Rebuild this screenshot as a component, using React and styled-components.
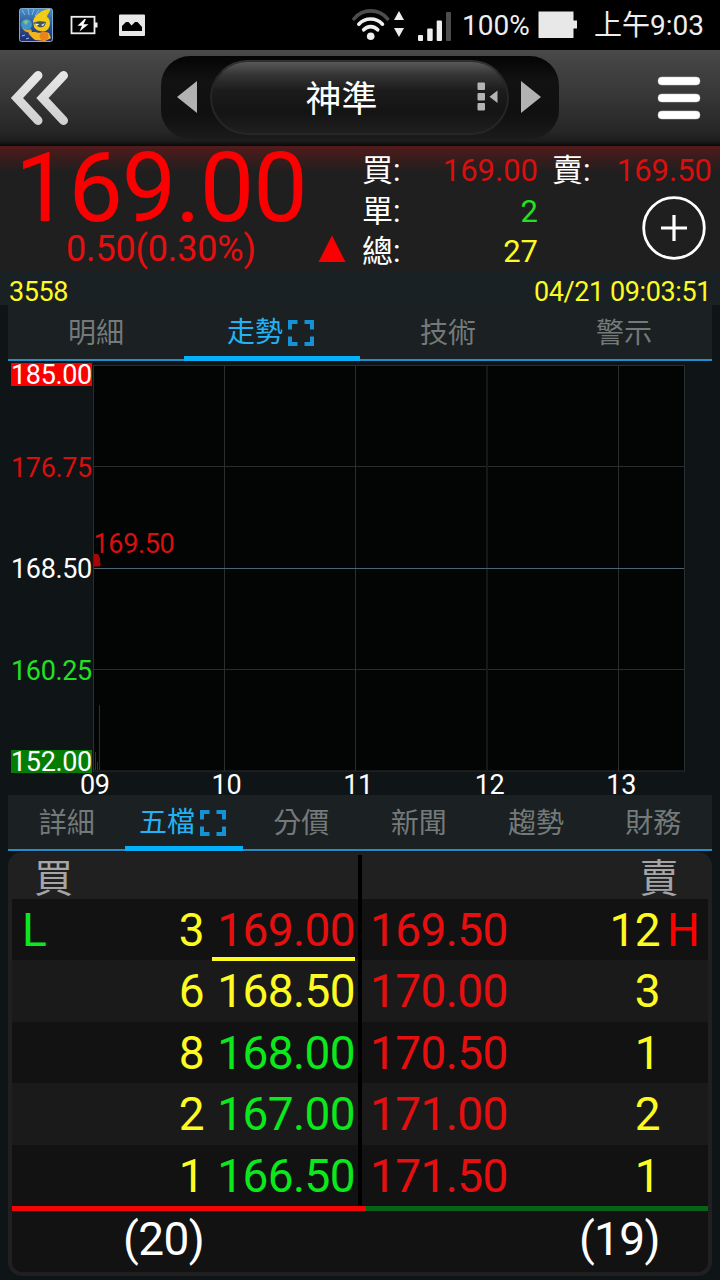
import React from "react";
import styled, { createGlobalStyle } from "styled-components";

const GlobalStyle = createGlobalStyle`
  body {
    margin: 0;
    background: #0f1416;
    font-family: Roboto, "Noto Sans CJK TC", sans-serif;
  }

  * {
    box-sizing: border-box;
  }

  svg {
    display: block;
    flex: none;
  }
`;

const RED = "#e60f0f";
const GREEN = "#0be81c";
const YELLOW = "#fdfb22";

const mainTabs = ["明細", "走勢", "技術", "警示"];
const subTabs = ["詳細", "五檔", "分價", "新聞", "趨勢", "財務"];

const priceLabels = [
  { text: "185.00", color: "#fff", fill: "#fb0000" },
  { text: "176.75", color: "#d90f0f" },
  { text: "168.50", color: "#fff" },
  { text: "160.25", color: "#24e024" },
  { text: "152.00", color: "#fff", fill: "#057d05" },
];

const hours = ["09", "10", "11", "12", "13"];

const depth = [
  { tag: "L", bidVol: 3, bid: "169.00", color: RED, ask: "169.50", askVol: 12, askTag: "H", last: true },
  { bidVol: 6, bid: "168.50", color: YELLOW, ask: "170.00", askVol: 3 },
  { bidVol: 8, bid: "168.00", color: GREEN, ask: "170.50", askVol: 1 },
  { bidVol: 2, bid: "167.00", color: GREEN, ask: "171.00", askVol: 2 },
  { bidVol: 1, bid: "166.50", color: GREEN, ask: "171.50", askVol: 1 },
];

function StatusIcons() {
  return (
    <>
      <svg width="34" height="34" viewBox="0 0 34 34">
        <defs>
          <linearGradient id="app" x1="0" y1="0" x2="0" y2="1">
            <stop offset="0" stopColor="#4b8fd0" />
            <stop offset="0.5" stopColor="#2b5590" />
            <stop offset="1" stopColor="#1f2c70" />
          </linearGradient>
        </defs>
        <rect x="0.5" y="0.5" width="33" height="33" rx="2" fill="url(#app)" stroke="#7ea9c9" />
        <path d="M3 2l3 5M9 1l1 6M15 1l-2 6M20 2l-4 6" stroke="#8fc4ea" strokeWidth="0.8" />
        <path d="M14 13C16 6 24 1 31 1c1 2-3 5-3 8 4 2 4 10 0 13-4 3-11 1-13-3z" fill="#f0cb18" />
        <path d="M14 15c4-2 9-2 13-1-1 5-4 6-7 5-2-1-4-2-6-4z" fill="#46535a" />
        <path d="M15.500 15.500l5 .5-3 2zM22 17l4-2-2 3z" fill="#e9efe9" />
        <path d="M9 22l3 2 4 0c5 2 10-1 14 1l2 5-6 3-10-1C13 29 9 27 9 22z" fill="#f5b41a" />
        <circle cx="25" cy="28" r="4.500" fill="#ea831c" />
        <circle cx="7.500" cy="16.500" r="5.500" fill="#3f94c8" />
        <path d="M4 14c2-2 4-2 6-1l-3 4z" fill="#8abf75" />
        <path d="M3 19c2 3 6 4 9 2l1 3c-4 1-8 0-10-5z" fill="#e6a825" />
        <path d="M3 28l3-1M7 31l3-1" stroke="#a4b8e8" />
      </svg>
      <svg width="28" height="20" viewBox="0 0 28 20">
        <rect x="1.500" y="1.800" width="23" height="16.500" fill="none" stroke="#eee" strokeWidth="1.800" />
        <rect x="25" y="7.500" width="2.500" height="5" fill="#eee" />
        <path d="M14.500 4L7.500 10.800h4.500L9.500 16.500l9-7.200h-5l2.500-5.300z" fill="#fff" />
      </svg>
      <svg width="26" height="22" viewBox="0 0 26 22">
        <rect y="0.500" width="26" height="21.500" rx="1" fill="#e8e8e8" />
        <path d="M3 17v-5l4-4h2.500l3 3.500 3.500-3.500h2.500l4.500 5v4z" fill="#000" />
      </svg>
    </>
  );
}

function SignalIcons() {
  return (
    <svg width="100" height="36" viewBox="352 8 100 36">
      <g fill="none" strokeWidth="3.600" strokeLinecap="round">
        <path d="M354 19.800A21.600 21.600 0 0 1 387.500 19.800" stroke="#4c4c4c" />
        <path d="M358.800 25.200A16 16 0 0 1 382.500 25.200" stroke="#eee" />
        <path d="M363.700 30.800A9.300 9.300 0 0 1 377.700 30.800" stroke="#eee" />
      </g>
      <circle cx="370.700" cy="37.200" r="3.800" fill="#eee" />
      <path d="M394 21l5-9 5 9zM394 29h10l-5 9z" fill="#eee" />
      <g fill="#eee">
        <rect x="418" y="36" width="5" height="6" rx="1" />
        <rect x="427.200" y="29.500" width="5.500" height="12.500" rx="1" />
        <rect x="436.700" y="21.500" width="5.300" height="20.500" rx="1" />
      </g>
      <rect x="446" y="13" width="5" height="29" rx="1" fill="#4c4c4c" />
    </svg>
  );
}

function BatteryIcon() {
  return (
    <svg width="40" height="28" viewBox="0 0 40 28">
      <path d="M0.500 0.500h35v9h3.500v8h-3.500v9.500H0.500z" fill="#e8e8e8" />
    </svg>
  );
}

function BackIcon() {
  return (
    <svg width="62" height="62" viewBox="0 0 62 62">
      <defs>
        <linearGradient id="chev" gradientUnits="userSpaceOnUse" x1="0" y1="4" x2="0" y2="58">
          <stop offset="0" stopColor="#e8e8e8" />
          <stop offset="1" stopColor="#cfcfcf" />
        </linearGradient>
      </defs>
      <g fill="none" stroke="url(#chev)" strokeWidth="9" strokeLinecap="round" strokeLinejoin="miter">
        <path d="M31 8.500L10 31 31 53.500" />
        <path d="M56.500 8.500L35.500 31 56.500 53.500" />
      </g>
    </svg>
  );
}

function MenuIcon() {
  return (
    <svg width="44" height="44" viewBox="0 0 44 44">
      <g fill="#fff" stroke="#c8c8c8" strokeWidth="0.500">
        <rect x="1" y="1" width="42" height="8" rx="3.800" />
        <rect x="1" y="18" width="42" height="8" rx="3.800" />
        <rect x="1" y="35" width="42" height="8" rx="3.800" />
      </g>
    </svg>
  );
}

function Arrow({ right }) {
  return (
    <svg width="22" height="34" viewBox="0 0 22 34">
      <path d={right ? "M1 1v32l20-16z" : "M21 1v32L1 17z"} fill="#b2b2b2" />
    </svg>
  );
}

function ListIcon() {
  return (
    <svg width="22" height="30" viewBox="0 0 22 30">
      <g fill="#b4b4b4">
        <rect x="0.500" y="0.500" width="7.500" height="7.500" rx="1" />
        <rect x="0.500" y="11" width="7.500" height="7.500" rx="1" />
        <rect x="0.500" y="21" width="7.500" height="7.500" rx="1" />
        <path d="M20.500 8.500v12.500L12.500 14.800z" />
      </g>
    </svg>
  );
}

function ExpandIcon() {
  return (
    <svg width="26" height="26" viewBox="0 0 26 26">
      <path
        d="M2 9.500V2h7.500M16.500 2H24v7.500M24 16.500V24h-7.500M9.500 24H2v-7.500"
        fill="none"
        stroke="#1592d6"
        strokeWidth="4"
      />
    </svg>
  );
}

function AddIcon() {
  return (
    <svg width="64" height="64" viewBox="0 0 64 64">
      <circle cx="32" cy="32" r="30.300" fill="none" stroke="#fff" strokeWidth="2.800" />
      <path d="M32 19v26M19 32h26" stroke="#fff" strokeWidth="3.200" />
    </svg>
  );
}

function TrendChart() {
  return (
    <svg width="594" height="410" viewBox="92 363 594 410">
      <rect x="93.500" y="365.500" width="591" height="405.500" fill="#020504" stroke="#2b2e2e" />
      <path d="M94 466.500h590M94 669.500h590M224.500 366v405M355.500 366v405M618.500 366v405" stroke="#2b2e2e" />
      <path d="M487 366v405" stroke="#161919" strokeWidth="2" />
      <path d="M94 568.500h590" stroke="#4a6474" />
      <path d="M93.500 608v162M99.500 705v65M95.500 752v18M97.500 762v8" stroke="#1c3444" />
      <path d="M94 554h4l2 4v4l1 3h-1v1.500h-6z" fill="#a80505" />
      <text x="93.500" y="552.500" fontSize="27" letterSpacing="-0.350" fill="#d90f0f">
        169.50
      </text>
    </svg>
  );
}

function Tabs({ items, active }) {
  return (
    <TabBar>
      {items.map((item) => (
        <Tab key={item} $active={item === active}>
          {item}
          {item === active && <ExpandIcon />}
        </Tab>
      ))}
    </TabBar>
  );
}

function App() {
  return (
    <Screen>
      <GlobalStyle />
      <StatusBar>
        <StatusLeft>
          <StatusIcons />
        </StatusLeft>
        <SignalIcons />
        <Percent>100%</Percent>
        <BatteryIcon />
        <Clock>上午9:03</Clock>
      </StatusBar>

      <NavBar>
        <BackIcon />
        <Switcher>
          <Arrow />
          <StockPill>
            <StockName>神準</StockName>
            <ListIcon />
          </StockPill>
          <Arrow right />
        </Switcher>
        <MenuIcon />
      </NavBar>

      <Quote>
        <LastPrice>
          <BigPrice>169.00</BigPrice>
          <Change>
            0.50(0.30%)
            <svg width="28" height="28" viewBox="0 0 28 28">
              <path d="M14 0.500L27.500 27H0.500z" fill="#fb0000" />
            </svg>
          </Change>
        </LastPrice>
        <Stats>
          <StatLabel>買:</StatLabel>
          <StatValue $color="#d90f0f">169.00</StatValue>
          <StatLabel>單:</StatLabel>
          <StatValue $color="#24e024">2</StatValue>
          <StatLabel>總:</StatLabel>
          <StatValue $color={YELLOW}>27</StatValue>
        </Stats>
        <SellSide>
          <SellRow>
            <StatLabel>賣:</StatLabel>
            <StatValue $color="#d90f0f">169.50</StatValue>
          </SellRow>
          <AddIcon />
        </SellSide>
      </Quote>

      <InfoBar>
        <span>3558</span>
        <span>04/21 09:03:51</span>
      </InfoBar>

      <Tabs items={mainTabs} active="走勢" />

      <ChartArea>
        <PriceAxis>
          {priceLabels.map((label) => (
            <PriceLabel key={label.text} $color={label.color} $fill={label.fill}>
              {label.text}
            </PriceLabel>
          ))}
        </PriceAxis>
        <TrendChart />
        <TimeAxis>
          {hours.map((hour) => (
            <span key={hour}>{hour}</span>
          ))}
        </TimeAxis>
      </ChartArea>

      <Tabs items={subTabs} active="五檔" />

      <Depth>
        <DepthHead>
          <span>買</span>
          <span>賣</span>
        </DepthHead>
        {depth.map((row, i) => (
          <DepthRow key={row.bid} $alt={i % 2 === 1}>
            <Cell $color={GREEN}>{row.tag}</Cell>
            <Cell $color={YELLOW} $right>
              {row.bidVol}
            </Cell>
            <BidCell $color={row.color} $last={row.last} $right>
              {row.bid}
            </BidCell>
            <Divider />
            <AskCell $color={RED}>{row.ask}</AskCell>
            <Cell $color={YELLOW} $right>
              {row.askVol}
            </Cell>
            <TagCell $color="#f00">{row.askTag}</TagCell>
          </DepthRow>
        ))}
        <RatioBar>
          <RatioBuy />
          <RatioSell />
        </RatioBar>
        <Totals>
          <span>(20)</span>
          <span>(19)</span>
        </Totals>
      </Depth>
    </Screen>
  );
}

export default App;

const Screen = styled.div`
  width: 720px;
  height: 1280px;
  overflow: hidden;
  display: flex;
  flex-direction: column;
  background: #0f1416;
`;

const StatusBar = styled.header`
  height: 50px;
  flex: none;
  display: flex;
  align-items: center;
  padding: 0 16px 0 19px;
  background: #000;
  color: #eee;
  font-size: 28px;
  line-height: 52px;
`;

const StatusLeft = styled.div`
  display: flex;
  align-items: center;
  gap: 17px;
  width: 333px;

  svg + svg + svg {
    margin-left: 4px;
  }
`;

const Percent = styled.span`
  margin-left: 10px;
  width: 76px;
  padding-top: 2px;
`;

const Clock = styled.span`
  margin-left: auto;
  padding-top: 2px;
`;

const NavBar = styled.nav`
  height: 96px;
  flex: none;
  display: flex;
  align-items: center;
  padding: 0 19px 0 7px;
  background: linear-gradient(#4a4a4a 0, #424242 15%, #3a3a3a 40%, #262626 85%, #1c1c1c 95%, #080808);

  > svg:last-child {
    margin-left: auto;
  }
`;

const Switcher = styled.div`
  width: 398px;
  height: 83px;
  margin: 0 0 2px 92px;
  display: flex;
  align-items: center;
  justify-content: space-between;
  padding: 0 17px 0 15px;
  border-radius: 29px;
  background: linear-gradient(#040404, #121212 30%, #101010 70%, #1b1b1b);
`;

const StockPill = styled.div`
  width: 299px;
  height: 75px;
  display: flex;
  align-items: center;
  padding: 0 8px 0 94px;
  justify-content: space-between;
  border: 2px solid #262626;
  border-top-color: #303030;
  border-radius: 38px;
  background: linear-gradient(#585858, #353535 18%, #1c1c1c 40%, #141414 70%, #1f1f1f);
`;

const StockName = styled.span`
  padding-top: 5px;
  color: #fff;
  font-size: 36px;
  line-height: 70px;
`;

const Quote = styled.section`
  height: 126px;
  flex: none;
  display: flex;
  background: linear-gradient(#521b1b 0, #3a1c1c 12px, #1f1f1f 26px);
`;

const LastPrice = styled.div`
  width: 362px;
  color: #fb0000;
`;

const BigPrice = styled.div`
  height: 84px;
  padding-left: 15px;
  font-size: 97px;
  letter-spacing: -1.100px;
  line-height: 84px;
`;

const Change = styled.div`
  display: flex;
  align-items: center;
  justify-content: space-between;
  height: 37px;
  padding: 0 16px 0 66px;
  font-size: 36px;
  letter-spacing: -0.150px;
  line-height: 38px;
  color: #e60f0f;
`;

const Stats = styled.div`
  width: 176px;
  padding-top: 4px;
  display: grid;
  grid-template-columns: auto 1fr;
  grid-template-rows: 41px 40px 40px;
`;

const StatLabel = styled.span`
  color: #fff;
  font-size: 31px;
  line-height: 42px;
`;

const StatValue = styled.span`
  color: ${({ $color }) => $color};
  font-size: 31px;
  line-height: 42px;
  text-align: right;
`;

const SellSide = styled.div`
  width: 174px;
  padding: 4px 0 0 14px;
  display: flex;
  flex-direction: column;

  > svg {
    align-self: flex-end;
    margin: 6px 6px 0 0;
  }
`;

const SellRow = styled.div`
  display: flex;
  justify-content: space-between;
  height: 40px;
`;

const InfoBar = styled.div`
  height: 33px;
  flex: none;
  display: flex;
  justify-content: space-between;
  padding: 0 9px 0 9px;
  background: #1a2124;
  color: ${YELLOW};
  font-size: 27px;
  letter-spacing: -0.400px;
  line-height: 41px;
`;

const TabBar = styled.div`
  height: 56px;
  flex: none;
  display: grid;
  grid-auto-flow: column;
  grid-auto-columns: minmax(0, 1fr);
  margin: 0 8px;
  background: #1b2022;
  border-bottom: 2px solid #1f8ec9;
`;

const Tab = styled.div`
  display: flex;
  align-items: center;
  justify-content: center;
  gap: 5px;
  height: 56px;
  padding-top: 4px;
  padding-right: ${({ $active }) => ($active ? 3 : 0)}px;
  padding-bottom: ${({ $active }) => ($active ? 0 : 3)}px;
  border-bottom: ${({ $active }) => ($active ? "5px solid #05b0fb" : "0")};
  color: ${({ $active }) => ($active ? "#23b2f5" : "#747979")};
  font-size: 28px;
  line-height: 50px;
`;

const ChartArea = styled.section`
  height: 434px;
  flex: none;
  display: grid;
  grid-template-columns: 92px 1fr;
  grid-template-rows: 410px 22px;
  padding-top: 2px;
`;

const PriceAxis = styled.div`
  display: grid;
  grid-template-rows: 93px 101px 102px 91px 22px;
  align-items: start;
  padding-left: 11px;
`;

const PriceLabel = styled.span`
  height: 23px;
  color: ${({ $color }) => $color};
  background: ${({ $fill }) => $fill || "transparent"};
  font-size: 27px;
  letter-spacing: -0.350px;
  line-height: 24px;
`;

const TimeAxis = styled.div`
  grid-column: 1 / -1;
  display: flex;
  padding-left: 29px;
  color: #fff;
  font-size: 27px;
  letter-spacing: -0.350px;
  line-height: 24px;

  span {
    width: 131.600px;
    text-align: center;
  }
`;

const Depth = styled.section`
  height: 424px;
  flex: none;
  margin: 1px 8px 0;
  padding: 0 4px 4px;
  border-radius: 14px;
  background: #202020;
  font-size: 46px;
  letter-spacing: -0.600px;
`;

const DepthHead = styled.div`
  height: 47px;
  display: flex;
  justify-content: space-between;
  padding: 0 30px 0 22px;
  color: #a5a5a5;
  font-size: 39px;
  line-height: 54px;
  background: linear-gradient(#000, #000) 346px 3px / 4px 44px no-repeat;
`;

const DepthRow = styled.div`
  height: 61.400px;
  display: grid;
  grid-template-columns: 100px 92px 152px 6px 180px 118px 1fr;
  background: ${({ $alt }) => ($alt ? "#1a1a1a" : "#121212")};
  line-height: 62px;
`;

const Cell = styled.span`
  color: ${({ $color }) => $color};
  text-align: ${({ $right }) => ($right ? "right" : "left")};

  &:first-child {
    padding-left: 10px;
  }
`;

const BidCell = styled(Cell)`
  margin-left: 8px;
  margin-right: 1px;
  position: relative;
  white-space: nowrap;

  &::after {
    content: "";
    display: ${({ $last }) => ($last ? "block" : "none")};
    position: absolute;
    left: 0;
    right: 0;
    bottom: 0;
    height: 4px;
    background: ${YELLOW};
  }
`;

const AskCell = styled(Cell)`
  padding-left: 8px;
`;

const TagCell = styled(Cell)`
  padding-left: 7px;
`;

const Divider = styled.span`
  margin: 0 0 0 2px;
  background: #000;
`;

const RatioBar = styled.div`
  height: 5px;
  display: flex;
`;

const RatioBuy = styled.div`
  width: 354px;
  background: #f20505;
`;

const RatioSell = styled.div`
  flex: 1;
  background: #076317;
`;

const Totals = styled.div`
  height: 61px;
  display: flex;
  justify-content: space-between;
  padding: 0 48px 0 111px;
  border-radius: 0 0 10px 10px;
  background: #121212;
  color: #fff;
  line-height: 56px;
`;
